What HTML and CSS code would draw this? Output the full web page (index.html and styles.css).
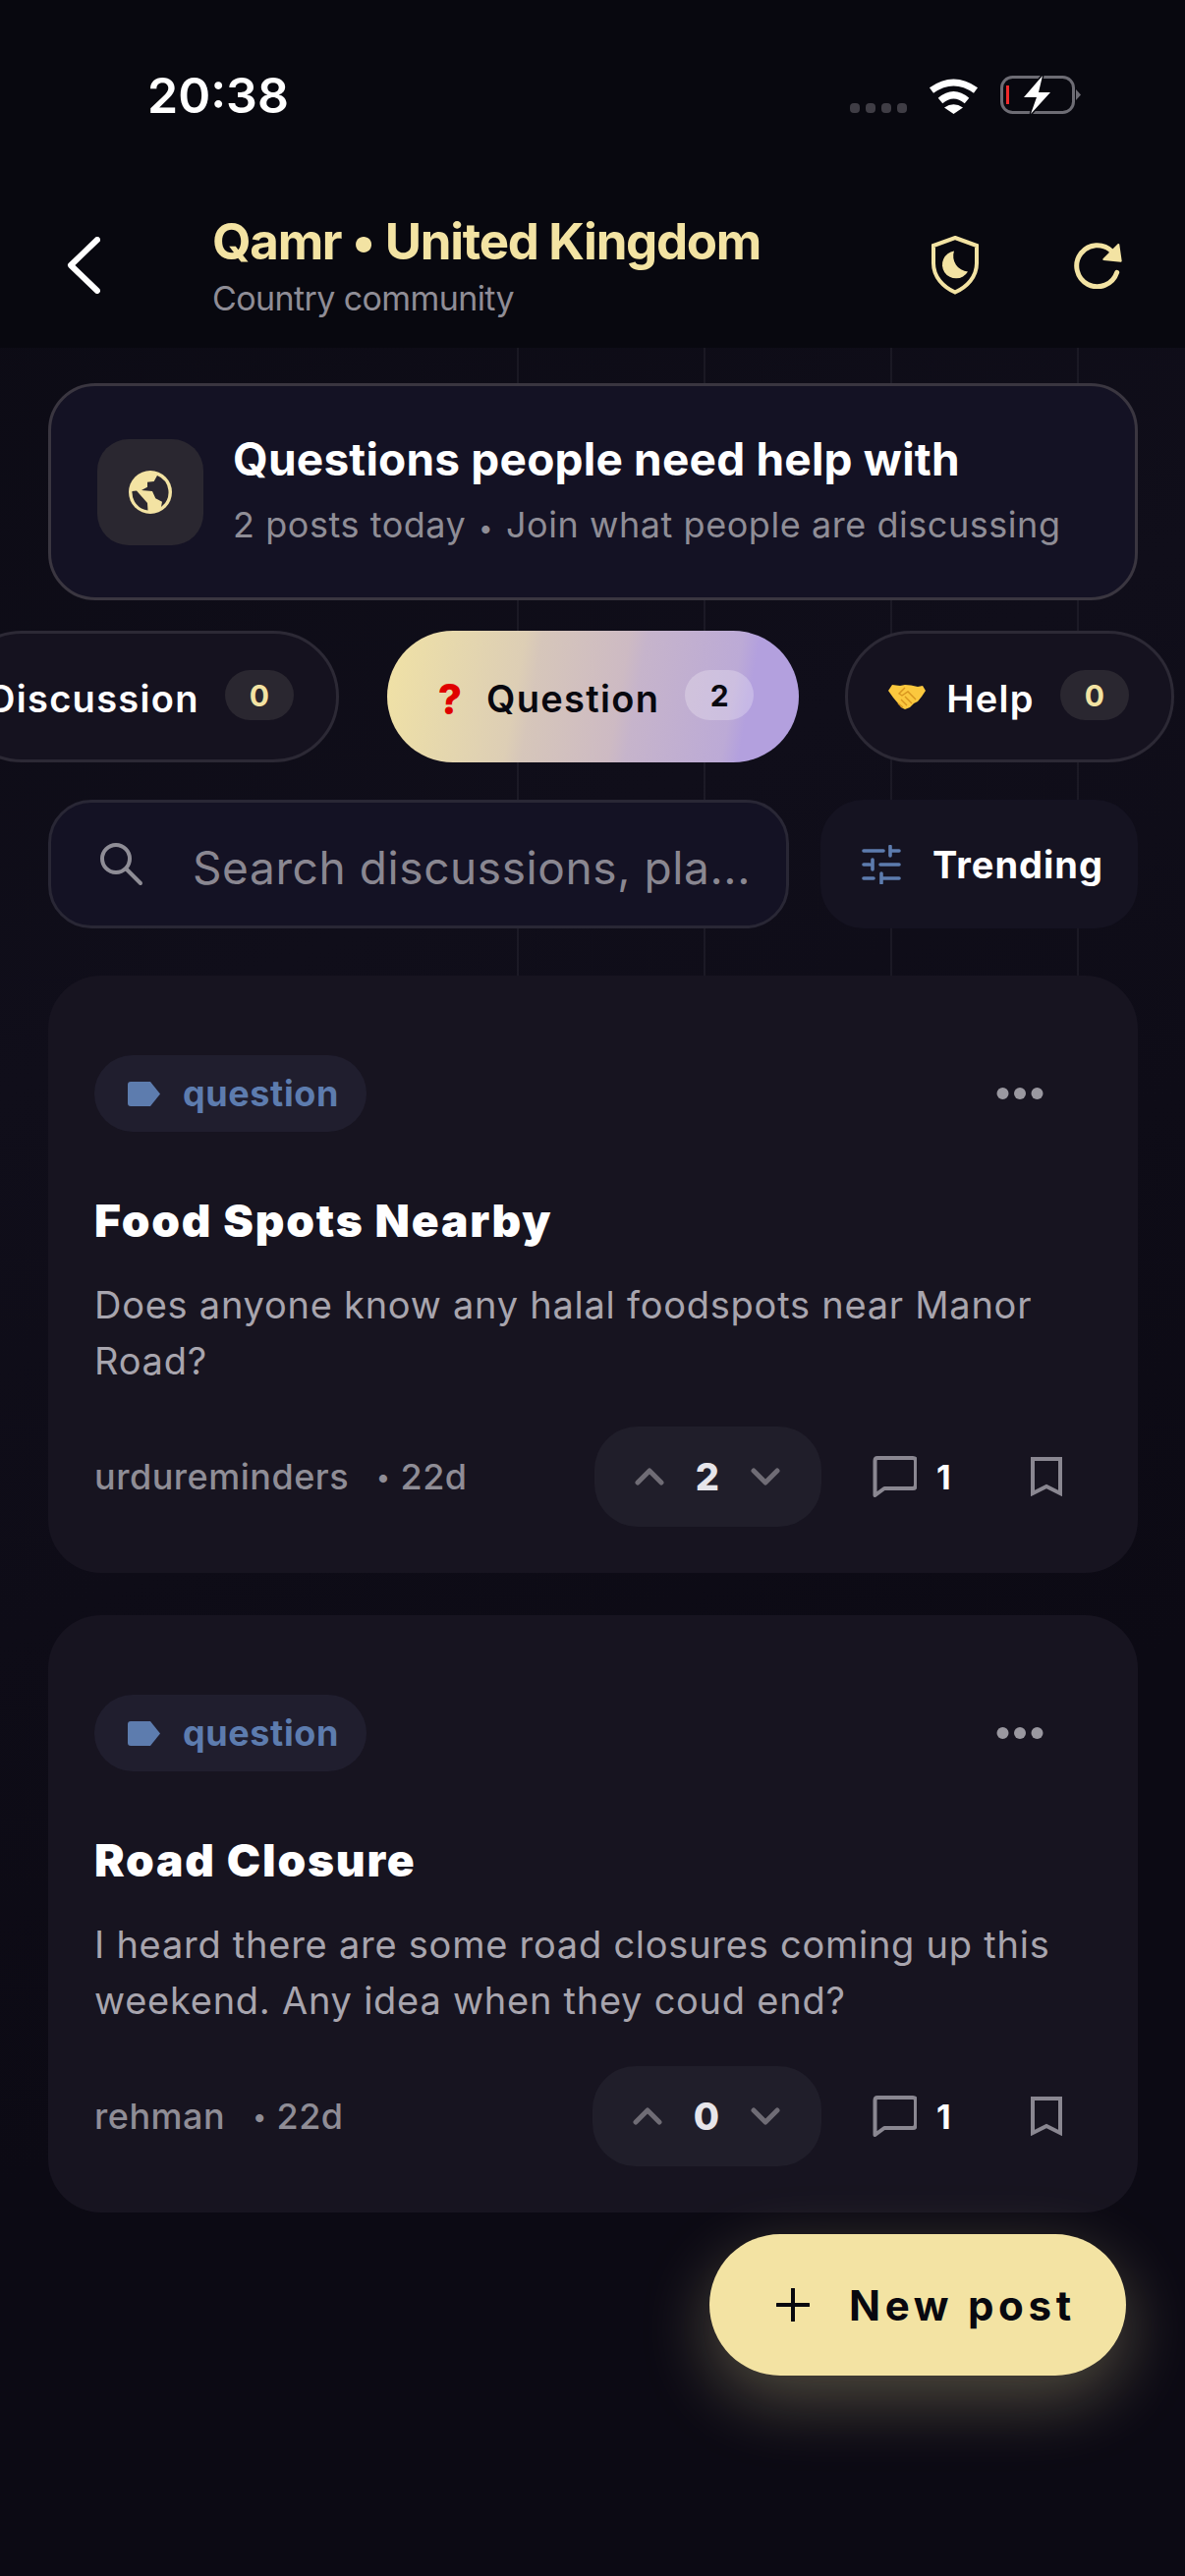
FILE: index.html
```html
<!DOCTYPE html>
<html lang="en">
<head>
    <meta charset="UTF-8">
    <meta name="viewport" content="width=device-width, initial-scale=1.0">
    <title>Qamr - United Kingdom</title>
    <link rel="stylesheet" href="styles.css">
</head>
<body>
    <header class="topbar">
        <div class="status">
            <span class="clock">20:38</span>
            <div class="status-icons">
                <div class="signal"><i></i><i></i><i></i><i></i></div>
                <svg class="wifi" width="51" height="37" viewBox="0 0 51 37">
                    <path d="M3 13Q25.500-3 48 13" fill="none" stroke="#fff" stroke-width="7"/>
                    <path d="M12 23.500Q25.500 12 39 23.500" fill="none" stroke="#fff" stroke-width="7"/>
                    <path d="M25.500 37L16 30.500Q25.500 24 35 30.500Z" fill="#fff"/>
                </svg>
                <svg class="battery" width="84" height="42" viewBox="0 0 84 42">
                    <rect x="1.500" y="2.500" width="73" height="36" rx="11" fill="none" stroke="#6d6c74" stroke-width="3"/>
                    <path d="M77 15L82 20.500L77 26Z" fill="#6d6c74"/>
                    <rect x="6" y="11" width="3" height="19" fill="#f02a2a"/>
                    <path d="M43 1L24 23H37L31 40L51 18H39Z" fill="#fff" stroke="#08080f" stroke-width="3" paint-order="stroke"/>
                </svg>
            </div>
        </div>
        <nav class="navbar">
            <svg class="back" width="34" height="58" viewBox="0 0 34 58">
                <path d="M31 3L4 29L31 55" fill="none" stroke="#fff" stroke-width="6" stroke-linecap="round" stroke-linejoin="round"/>
            </svg>
            <div class="nav-title">
                <h1>Qamr • United Kingdom</h1>
                <p>Country community</p>
            </div>
            <svg class="shield" width="48" height="60" viewBox="0 0 48 60">
                <path d="M24 2L46 10V28C46 42 36 52 24 57.500C12 52 2 42 2 28V10Z" fill="none" stroke="#f3e3a3" stroke-width="4"/>
                <path d="M23 15.500A14 14 0 1 0 37 36.500A16 16 0 0 1 23 15.500Z" fill="#f3e3a3"/>
            </svg>
            <svg class="refresh" width="50" height="48" viewBox="0 0 50 48">
                <path d="M44.700 31.300A21 21 0 1 1 39.700 10" fill="none" stroke="#f3e3a3" stroke-width="5" stroke-linecap="round"/>
                <path d="M46.300 3L48.700 19.700L31.300 18Z" fill="#f3e3a3" stroke="#f3e3a3" stroke-width="2" stroke-linejoin="round"/>
            </svg>
        </nav>
    </header>

    <main class="content">
        <section class="hero">
            <div class="hero-icon">
                <svg width="44" height="44" viewBox="0 0 44 44">
                    <circle cx="22" cy="22" r="22" fill="#f3e3a3"/>
                    <path d="M29 5L25.700 11L19 11.700V16.700L13 20L24 21L27.300 28.300L34 31.700L33 37A18.500 18.500 0 0 0 29 5Z" fill="#2a2730"/>
                    <path d="M3.500 21L8 20.500L19 33L19.500 40.500A18.500 18.500 0 0 1 3.500 21Z" fill="#2a2730"/>
                </svg>
            </div>
            <div class="hero-text">
                <h2>Questions people need help with</h2>
                <p>2 posts today <span class="sep">•</span> Join what people are discussing</p>
            </div>
        </section>

        <div class="chips">
            <div class="chip chip-first">
                <span class="chip-label">Discussion</span>
                <span class="chip-count">0</span>
            </div>
            <div class="chip chip-active">
                <span class="chip-q">?</span>
                <span class="chip-label">Question</span>
                <span class="chip-count">2</span>
            </div>
            <div class="chip">
                <svg class="shake" width="38" height="26" viewBox="0 0 38 26">
                    <path d="M4 1L12 2L17 1L23 1.500L30 3L35 2L38 7L34 13L30 18L26 20L22 24L17 26L13 24L10 20L5 14L0 7Z" fill="#fbc83e"/>
                    <path d="M10 20L15 24M13 16L19 22M17 13L24 20M28 16L20 8L14 12L11 10L17 4" fill="none" stroke="#d8951f" stroke-width="1.400"/>
                </svg>
                <span class="chip-label">Help</span>
                <span class="chip-count">0</span>
            </div>
        </div>

        <div class="tools">
            <div class="search">
                <svg width="44" height="44" viewBox="0 0 44 44">
                    <circle cx="16" cy="16" r="14" fill="none" stroke="#8f8d96" stroke-width="4"/>
                    <path d="M27 27L41 41" stroke="#8f8d96" stroke-width="4" stroke-linecap="round"/>
                </svg>
                <span>Search discussions, pla...</span>
            </div>
            <div class="sort">
                <svg width="40" height="40" viewBox="0 0 40 40" fill="none" stroke="#5d7cae" stroke-width="3.600" stroke-linecap="round">
                    <path d="M2 6H22M30 6H38M29 1.500V11M2 20H8M19 20H38M11 15V25M2 34H12M20 34H38M20 29V39"/>
                </svg>
                <span>Trending</span>
            </div>
        </div>

        <article class="post">
            <div class="post-top">
                <div class="tag">
                    <svg width="33" height="25" viewBox="0 0 33 25"><path d="M3 0H23L33 12.500L23 25H3Q0 25 0 22V3Q0 0 3 0Z" fill="#5d7cae"/></svg>
                    <span>question</span>
                </div>
                <svg class="more" width="48" height="14" viewBox="0 0 48 14" fill="#9a98a0">
                    <circle cx="6.500" cy="7" r="6"/><circle cx="24" cy="7" r="6"/><circle cx="41.500" cy="7" r="6"/>
                </svg>
            </div>
            <h3>Food Spots Nearby</h3>
            <p class="post-body">Does anyone know any halal foodspots near Manor Road?</p>
            <div class="post-foot">
                <div class="meta"><span>urdureminders</span><span class="sep">•</span><span>22d</span></div>
                <div class="vote">
                    <svg width="30" height="18" viewBox="0 0 30 18"><path d="M3 15L15 3L27 15" fill="none" stroke="#6f6c75" stroke-width="5" stroke-linecap="round" stroke-linejoin="round"/></svg>
                    <b>2</b>
                    <svg width="30" height="18" viewBox="0 0 30 18"><path d="M3 3L15 15L27 3" fill="none" stroke="#6f6c75" stroke-width="5" stroke-linecap="round" stroke-linejoin="round"/></svg>
                </div>
                <div class="comments">
                    <svg width="45" height="42" viewBox="0 0 45 42"><path d="M5 2H41Q44 2 44 5V29Q44 33 41 33H12L2.500 40V5Q2.500 2 5 2Z" fill="none" stroke="#8a8791" stroke-width="4" stroke-linejoin="round"/></svg>
                    <b>1</b>
                </div>
                <svg class="mark" width="32" height="40" viewBox="0 0 32 40"><path d="M2 2H30V37L16 30L2 37Z" fill="none" stroke="#8a8791" stroke-width="4"/></svg>
            </div>
        </article>

        <article class="post">
            <div class="post-top">
                <div class="tag">
                    <svg width="33" height="25" viewBox="0 0 33 25"><path d="M3 0H23L33 12.500L23 25H3Q0 25 0 22V3Q0 0 3 0Z" fill="#5d7cae"/></svg>
                    <span>question</span>
                </div>
                <svg class="more" width="48" height="14" viewBox="0 0 48 14" fill="#9a98a0">
                    <circle cx="6.500" cy="7" r="6"/><circle cx="24" cy="7" r="6"/><circle cx="41.500" cy="7" r="6"/>
                </svg>
            </div>
            <h3>Road Closure</h3>
            <p class="post-body">I heard there are some road closures coming up this weekend. Any idea when they coud end?</p>
            <div class="post-foot">
                <div class="meta"><span>rehman</span><span class="sep">•</span><span>22d</span></div>
                <div class="vote">
                    <svg width="30" height="18" viewBox="0 0 30 18"><path d="M3 15L15 3L27 15" fill="none" stroke="#6f6c75" stroke-width="5" stroke-linecap="round" stroke-linejoin="round"/></svg>
                    <b>0</b>
                    <svg width="30" height="18" viewBox="0 0 30 18"><path d="M3 3L15 15L27 3" fill="none" stroke="#6f6c75" stroke-width="5" stroke-linecap="round" stroke-linejoin="round"/></svg>
                </div>
                <div class="comments">
                    <svg width="45" height="42" viewBox="0 0 45 42"><path d="M5 2H41Q44 2 44 5V29Q44 33 41 33H12L2.500 40V5Q2.500 2 5 2Z" fill="none" stroke="#8a8791" stroke-width="4" stroke-linejoin="round"/></svg>
                    <b>1</b>
                </div>
                <svg class="mark" width="32" height="40" viewBox="0 0 32 40"><path d="M2 2H30V37L16 30L2 37Z" fill="none" stroke="#8a8791" stroke-width="4"/></svg>
            </div>
        </article>
    </main>

    <button class="fab">
        <svg width="34" height="34" viewBox="0 0 34 34"><path d="M17 1V33M1 17H33" stroke="#08080f" stroke-width="4" stroke-linecap="round"/></svg>
        <span>New post</span>
    </button>
</body>
</html>
```

FILE: styles.css
```css
* {
    box-sizing: border-box;
}
body {
    margin: 0;
    width: 1206px;
    height: 2622px;
    overflow: hidden;
    position: relative;
    font-family: Inter, "Liberation Sans", sans-serif;
    color: #fff;
    background: linear-gradient(155deg, #0b0a13 0%, #100e1a 35%, #0c0a14 70%, #0c0a14 100%);
}
h1, h2, h3, p {
    margin: 0;
}

/* top bar */
.topbar {
    background-color: #08080f;
    height: 354px;
}
.status {
    height: 194px;
    display: flex;
    align-items: center;
    justify-content: space-between;
    padding: 0 104px 0 150px;
}
.clock {
    font-size: 50px;
    font-weight: 600;
}
.status-icons {
    display: flex;
    align-items: center;
    gap: 22px;
}
.signal {
    display: flex;
    gap: 6px;
    align-self: flex-end;
    margin-bottom: 3px;
}
.signal i {
    width: 10px;
    height: 10px;
    border-radius: 4px;
    background-color: #3f3d45;
}
.navbar {
    height: 160px;
    display: flex;
    align-items: center;
    padding: 0 64px 0 68px;
}
.back {
    margin-top: -8px;
}
.nav-title {
    flex: 1;
    margin: 8px 0 0 114px;
}
.nav-title h1 {
    font-size: 51px;
    line-height: 58px;
    font-weight: 700;
    letter-spacing: -1.3px;
    color: #f3e3a3;
    margin-top: -8px;
}
.nav-title p {
    margin-top: 2px;
    font-size: 34px;
    line-height: 54px;
    letter-spacing: -0.6px;
    color: #8f8d96;
}
.shield {
    margin-right: 96px;
    margin-top: -8px;
}
.refresh {
    margin-top: -8px;
}

/* main column */
.content {
    position: relative;
    padding: 36px 48px 0 49px;
}
.content::before {
    content: "";
    position: absolute;
    top: 0;
    left: 526px;
    right: 0;
    height: 640px;
    background: linear-gradient(90deg, rgba(255,255,255,0.05) 2px, transparent 2px) 0 0 / 190px 100% repeat-x;
}
.content > * {
    position: relative;
}
.hero {
    height: 221px;
    display: flex;
    align-items: center;
    gap: 30px;
    padding: 0 47px;
    background-color: #141224;
    border: 3px solid #3a3640;
    border-radius: 48px;
}
.hero-icon {
    width: 108px;
    height: 108px;
    flex: none;
    display: flex;
    align-items: center;
    justify-content: center;
    background-color: #2a2730;
    border-radius: 32px;
}
.hero-text {
    margin-top: -3px;
}
.hero-text h2 {
    font-size: 46px;
    line-height: 56px;
    font-weight: 700;
    letter-spacing: 0.2px;
}
.hero-text p {
    margin-top: 17px;
    font-size: 36px;
    line-height: 44px;
    color: #8f8d96;
    letter-spacing: 0.55px;
}
.hero-text .sep {
    font-size: 26px;
    margin: 0 2px;
}

/* filter chips */
.chips {
    display: flex;
    gap: 47px;
    margin: 31px -48px 0 -49px;
    overflow: hidden;
}
.chip {
    height: 134px;
    flex: none;
    display: flex;
    align-items: center;
    padding: 0 43px 0 41px;
    background-color: #15121f;
    border: 3px solid #2c2935;
    border-radius: 67px;
}
.chip-first {
    margin-left: -45px;
    padding-left: 30px;
    margin-right: 2px;
}
.chip-active {
    border: none;
    padding: 0 46px 0 52px;
    color: #08080f;
    background: linear-gradient(100deg, #f1e2a5 0%, #e6d8ad 16%, #ddceb5 32%, #d6c6ba 36%, #cdbac3 56%, #c6b4cb 60%, #bcaad6 82%, #b3a0de 86%, #b3a0de 100%);
}
.chip-label {
    font-size: 38px;
    font-weight: 600;
    letter-spacing: 1.3px;
    line-height: 46px;
    margin-top: 4px;
}
.chip-q {
    font-size: 42px;
    font-weight: 800;
    color: #e00000;
    margin-right: 25px;
    margin-top: 4px;
}
.shake {
    margin-right: 21px;
}
.chip-count {
    width: 70px;
    height: 51px;
    margin-left: 26px;
    margin-bottom: 3px;
    display: flex;
    align-items: center;
    justify-content: center;
    font-size: 30px;
    font-weight: 700;
    color: #f3e3a3;
    background-color: #2a2730;
    border-radius: 26px;
}
.chip-active .chip-count {
    color: #08080f;
    background-color: rgba(255,255,255,0.25);
}

/* search + sort */
.tools {
    display: flex;
    gap: 32px;
    margin-top: 38px;
}
.search {
    width: 754px;
    height: 131px;
    display: flex;
    align-items: center;
    gap: 50px;
    padding-left: 50px;
    background-color: #141224;
    border: 3px solid #292735;
    border-radius: 44px;
    font-size: 46px;
    letter-spacing: 0.6px;
    color: #8a8791;
}
.search span {
    margin-top: 7px;
}
.sort {
    flex: 1;
    display: flex;
    align-items: center;
    gap: 32px;
    padding-left: 42px;
    background-color: #151321;
    border-radius: 44px;
    font-size: 38px;
    font-weight: 700;
    letter-spacing: 1px;
}

/* posts */
.post {
    height: 608px;
    margin-top: 43px;
    padding: 81px 77px 47px 47px;
    background-color: #171420;
    border-radius: 54px;
}
.tools + .post {
    margin-top: 48px;
}
.post-top {
    display: flex;
    align-items: center;
    justify-content: space-between;
    padding-right: 19px;
}
.tag {
    height: 78px;
    display: flex;
    align-items: center;
    gap: 23px;
    padding: 0 28px 0 34px;
    background-color: #201e2e;
    border-radius: 39px;
    font-size: 36px;
    font-weight: 700;
    letter-spacing: 0.6px;
    color: #5d7cae;
}
.post h3 {
    margin-top: 62px;
    font-size: 46px;
    line-height: 56px;
    font-weight: 900;
    letter-spacing: 1.8px;
}
.post-body {
    margin-top: 30px;
    font-size: 38px;
    line-height: 57px;
    letter-spacing: 0.75px;
    color: #a8a5ae;
}
.post-foot {
    margin-top: 38px;
    display: flex;
    align-items: center;
}
.meta {
    flex: 1;
    display: flex;
    align-items: center;
    gap: 14px;
    font-size: 36px;
    font-weight: 500;
    letter-spacing: 0.5px;
    color: #8f8d96;
}
.meta .sep {
    font-size: 26px;
    margin: 0 -4px 0 14px;
}
.vote {
    height: 102px;
    display: flex;
    align-items: center;
    gap: 32px;
    padding: 0 42px 0 41px;
    background-color: #201e2a;
    border-radius: 44px;
}
.vote b {
    font-size: 38px;
    font-weight: 800;
    color: #e6e5ea;
}
.comments {
    display: flex;
    align-items: center;
    gap: 20px;
    margin-left: 52px;
    width: 81px;
}
.comments b {
    font-size: 34px;
    font-weight: 700;
}
.mark {
    margin-left: 80px;
}

/* floating button, sits over the list */
.fab {
    position: absolute;
    right: 60px;
    bottom: 204px;
    width: 424px;
    height: 144px;
    display: flex;
    align-items: center;
    gap: 40px;
    padding: 0 0 0 68px;
    border: none;
    border-radius: 72px;
    background-color: #f3e3a3;
    color: #08080f;
    font-family: inherit;
    font-size: 42px;
    font-weight: 700;
    letter-spacing: 4.7px;
    box-shadow: 0 24px 70px rgba(243,227,163,0.3);
}
```
